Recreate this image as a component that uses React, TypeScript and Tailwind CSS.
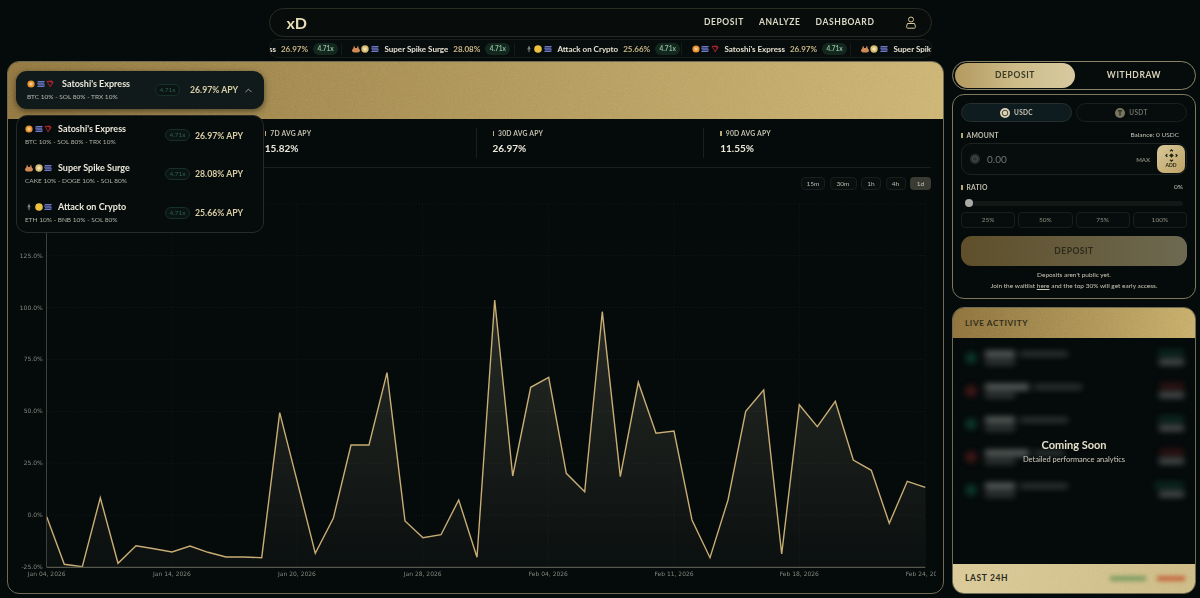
import { ChevronUp } from "lucide-react"

const font = "font-['Lato','Noto_Sans',sans-serif]"

const points = [
  [140, 860], [193, 1003], [247, 1010], [301, 803], [354, 1000], [408, 947], [462, 956], [516, 966], [570, 948], [624, 967],
  [678, 981], [731, 981], [785, 983], [839, 548], [893, 760], [946, 970], [1000, 865], [1053, 645], [1107, 645], [1161, 428],
  [1215, 873], [1269, 923], [1323, 914], [1376, 810], [1431, 982],
].map(([x, y]) => [x / 3, 230 + y / 3]).concat(
  [
    [44, 210], [98, 738], [152, 472], [206, 442], [259, 730], [314, 785], [367, 245], [421, 740], [475, 457], [528, 610],
    [582, 603], [636, 870], [690, 983], [744, 810], [797, 544], [851, 480], [905, 972], [958, 524], [1012, 590], [1066, 514],
    [1120, 690], [1174, 721], [1228, 880], [1282, 754], [1336, 772],
  ].map(([x, y]) => [480 + x / 3, 230 + y / 3])
)

const line = points.map(([x, y]) => `${x.toFixed(1)},${y.toFixed(1)}`).join(" ")
const yTicks = [["125.0%", 255.7], ["100.0%", 307.5], ["75.0%", 359.4], ["50.0%", 411.3], ["25.0%", 463.2], ["0.0%", 515.2], ["-25.0%", 567]] as const
const xTicks = [["Jan 04, 2026", 46.7], ["Jan 14, 2026", 172], ["Jan 20, 2026", 297], ["Jan 28, 2026", 422.7], ["Feb 04, 2026", 548.3], ["Feb 11, 2026", 674], ["Feb 18, 2026", 799.3], ["Feb 24, 2026", 925.3]] as const

function Coin({ kind }: { kind: string }) {
  if (kind === "btc") return <svg width="8" height="8" viewBox="0 0 8 8"><circle cx="4" cy="4" r="3.6" fill="#e8952f" /><circle cx="4" cy="4" r="1.7" fill="#f6c889" /></svg>
  if (kind === "sol") return <svg width="8" height="8" viewBox="0 0 8 8"><path d="M1 1h7L7 2.4H0zM0 3.3h7L8 4.7H1zM1 5.6h7L7 7H0z" fill="#6d78c8" /></svg>
  if (kind === "trx") return <svg width="8" height="8" viewBox="0 0 8 8"><path d="M.5 1 6 .5 7.6 2.6 4 7.6zM1.8 1.8 4 6 6 2.6z" fill="#b3242c" fillRule="evenodd" /></svg>
  if (kind === "cake") return <svg width="8" height="8" viewBox="0 0 8 8"><path d="M2 .5 3.2 3h1.6L6 .5 6.8 3.4C7.6 4 8 4.8 8 5.4 8 6.9 6.2 7.6 4 7.6S0 6.900 0 5.400C0 4.800.4 4 1.200 3.400z" fill="#cf8a55" /></svg>
  if (kind === "doge") return <svg width="8" height="8" viewBox="0 0 8 8"><circle cx="4" cy="4" r="3.700" fill="#d8bd70" /><circle cx="4" cy="4" r="1.800" fill="#efe3bb" /></svg>
  if (kind === "bnb") return <svg width="8" height="8" viewBox="0 0 8 8"><circle cx="4" cy="4" r="3.800" fill="#ecc13f" /></svg>
  return <svg width="8" height="8" viewBox="0 0 8 8"><path d="M4 .5 2.300 4 4 5 5.700 4zM2.500 4.800 4 7.500 5.500 4.800 4 5.700z" fill="#7d817c" /></svg>
}

function Coins({ kinds }: { kinds: string[] }) {
  return <div className="flex items-center gap-[1.5px]">{kinds.map((k) => <Coin key={k} kind={k} />)}</div>
}

function Badge() {
  return (
    <span className="flex h-[12px] w-[25px] shrink-0 items-center justify-center rounded-full border border-[#17302a] bg-[#0a1513] text-[6.5px] text-[#2f5e4c]">
      4.71x
    </span>
  )
}

function Label({ children }: { children: string }) {
  return (
    <div className="flex h-[10px] items-center gap-[4px] text-[6.8px] font-bold tracking-[0.2px] text-[#c2bfad]">
      <span className="h-[5px] w-[1.5px] bg-[#b9a878]" />
      {children}
    </div>
  )
}

function Grain({ id }: { id: string }) {
  return (
    <svg className="pointer-events-none absolute inset-0 h-full w-full opacity-25 mix-blend-overlay">
      <filter id={id}>
        <feTurbulence type="fractalNoise" baseFrequency="1.2" numOctaves="2" />
        <feColorMatrix type="saturate" values="0" />
      </filter>
      <rect width="100%" height="100%" filter={`url(#${id})`} />
    </svg>
  )
}

const strategies = [
  { name: "Satoshi's Express", mix: "BTC 10% - SOL 80% - TRX 10%", apy: "26.97%", coins: ["btc", "sol", "trx"] },
  { name: "Super Spike Surge", mix: "CAKE 10% - DOGE 10% - SOL 80%", apy: "28.08%", coins: ["cake", "doge", "sol"] },
  { name: "Attack on Crypto", mix: "ETH 10% - BNB 10% - SOL 80%", apy: "25.66%", coins: ["eth", "bnb", "sol"] },
]

const ticker = [
  { s: strategies[0], w: "w-[169px]" },
  { s: strategies[1], w: "w-[173px]" },
  { s: strategies[2], w: "w-[167px]" },
  { s: strategies[0], w: "w-[169px]" },
  { s: strategies[1], w: "w-[173px]" },
]

function BlurRow({ color, w1, w2, amt }: { color: string, w1: string, w2: string, amt: string }) {
  return (
    <div className="flex h-[33px] items-center pl-[4px] pr-[3px] blur-[3px]">
      <span className={`h-[12px] w-[12px] rounded-full ${color}`} />
      <div className="ml-[8px] flex flex-col gap-[3px]">
        <div className="flex gap-[5px]">
          <span className={`h-[6px] ${w1} bg-[#8b908c]`} />
          <span className={`h-[4px] ${w2} self-center bg-[#5a5f5c]`} />
        </div>
        <span className="h-[5px] w-[30px] bg-[#4e5350]" />
      </div>
      <div className="ml-auto flex flex-col items-end gap-[3px]">
        <span className={`h-[6px] ${amt}`} />
        <span className="h-[6px] w-[25px] bg-[#6d716e]" />
      </div>
    </div>
  )
}

export default function App() {
  return (
    <div className={`${font} h-[598px] w-[1200px] overflow-hidden bg-[#050a0b] text-[#e8e4d4]`}>
      <div className="mx-auto flex w-[663px] flex-col pt-[8px]">
        <div className="flex h-[29px] items-center rounded-full border border-[#2b2d25] bg-[#080d0c] pl-[17px] pr-[14px]">
          <span className="text-[16px] font-bold leading-none text-[#e6dcb6]">xD</span>
          <nav className="ml-auto flex items-center gap-[15px] text-[8.500px] font-bold tracking-[0.6px] text-[#dedac8]">
            <span>DEPOSIT</span>
            <span>ANALYZE</span>
            <span>DASHBOARD</span>
          </nav>
          <svg className="ml-[30px]" width="12" height="13" viewBox="0 0 12 13" fill="none" stroke="#d6c89c" strokeWidth="1">
            <circle cx="6" cy="3.500" r="2.500" />
            <path d="M2.500 7.500h7l1 3.200c0 1-.5 1.500-1.500 1.500H3c-1 0-1.500-.5-1.500-1.500z" />
          </svg>
        </div>
        <div className="mt-[2px] flex h-[19px] items-center overflow-hidden rounded-[9px] border border-[#181d1a] bg-[#070c0c] text-[8px] font-bold">
          <div className="ml-[-97px] flex shrink-0 items-center">
            {ticker.map(({ s, w }, i) => (
              <div key={i} className={`flex shrink-0 items-center border-r border-[#161b19] pl-[10px] ${w}`}>
                <Coins kinds={s.coins} />
                <span className="ml-[6px] whitespace-nowrap text-[#e6e2d2]">{s.name}</span>
                <span className="ml-[5px] text-[#cdbb88]">{s.apy}</span>
                <span className="ml-[5px] flex h-[12px] w-[25px] items-center justify-center rounded-full bg-[#12281f] text-[6.500px] text-[#8fb79a]">4.71x</span>
              </div>
            ))}
          </div>
        </div>
      </div>

      <div className="mt-[3px] flex h-[533px] gap-[8px] pl-[7px]">
        <section className="relative flex w-[937px] flex-col rounded-[12px] border border-[#6f6b56] bg-[#050a0b]">
          <div className="relative h-[57px] shrink-0 overflow-hidden rounded-t-[11px] bg-gradient-to-r from-[#8f7440] to-[#cbb271]">
            <Grain id="grain-main" />
          </div>

          <div className="absolute left-[8px] top-[9px] z-10 flex h-[38px] w-[248px] items-center rounded-[11px] bg-[#101a1b] pl-[11px] shadow-[0_2px_6px_rgba(0,0,0,0.5)]">
            <div className="w-[128px]">
              <div className="flex items-center">
                <Coins kinds={strategies[0].coins} />
                <span className="ml-[8px] text-[9px] font-bold leading-[12px] text-[#ece8da]">Satoshi's Express</span>
              </div>
              <div className="mt-[2px] whitespace-nowrap text-[6.500px] text-[#b8b9af]">{strategies[0].mix}</div>
            </div>
            <Badge />
            <span className="ml-[10px] whitespace-nowrap text-[8.700px] font-bold text-[#d9cfa6]">26.97% APY</span>
            <ChevronUp className="ml-[5px] text-[#d9d6c6]" size={11} strokeWidth={1.500} />
          </div>

          <div className="absolute left-[8px] top-[53px] z-10 flex h-[118px] w-[248px] flex-col justify-center rounded-[11px] border border-[#262b27] bg-[#060b0c]">
            {strategies.map((s) => (
              <div key={s.name} className="flex h-[39px] items-center pl-[8px]">
                <div className="w-[140px]">
                  <div className="flex items-center">
                    <Coins kinds={s.coins} />
                    <span className="ml-[6px] text-[9px] font-bold leading-[12px] text-[#ece8da]">{s.name}</span>
                  </div>
                  <div className="mt-[2px] whitespace-nowrap text-[6.500px] text-[#b0b1a7]">{s.mix}</div>
                </div>
                <Badge />
                <span className="ml-[5px] whitespace-nowrap text-[8.700px] font-bold text-[#d9cfa6]">{s.apy} APY</span>
              </div>
            ))}
          </div>

          <div className="mx-[12px] grid h-[49px] shrink-0 grid-cols-4 border-b border-[#1a1f1d] pt-[9px]">
            <div />
            {[["7D AVG APY", "15.82%"], ["30D AVG APY", "26.97%"], ["90D AVG APY", "11.55%"]].map(([label, value]) => (
              <div key={label} className="h-[30px] border-l border-[#1a1f1d] pl-[16px] first:border-l-0">
                <Label>{label}</Label>
                <div className="mt-[3px] text-[10px] font-bold leading-[14px] text-[#ece8da]">{value}</div>
              </div>
            ))}
          </div>

          <div className="mr-[12px] mt-[9px] flex shrink-0 justify-end gap-[4.500px] text-[6.500px] text-[#bcbcae]">
            {[["15m", "w-[24px]"], ["30m", "w-[27px]"], ["1h", "w-[20px]"], ["4h", "w-[20px]"]].map(([t, w]) => (
              <span key={t} className={`flex h-[13px] items-center justify-center rounded-[4px] border border-[#191e1c] bg-[#090e0e] ${w}`}>{t}</span>
            ))}
            <span className="flex h-[13px] w-[21px] items-center justify-center rounded-[4px] bg-[#3a3c33] text-[#c8c6b4]">1d</span>
          </div>

          <svg className="mt-[13px] block shrink-0" width="928" height="390" viewBox="8 203 928 390">
            <defs>
              <linearGradient id="area" gradientUnits="userSpaceOnUse" x1="0" y1="300" x2="0" y2="567">
                <stop offset="0" stopColor="#c8c4a0" stopOpacity="0.18" />
                <stop offset="1" stopColor="#c8c4a0" stopOpacity="0.03" />
              </linearGradient>
            </defs>
            <g stroke="#161c1a" strokeWidth="0.7" strokeDasharray="1.500 1.500">
              <line x1="46.700" x2="925.300" y1="203.800" y2="203.800" />
              {yTicks.slice(0, 6).map(([, y]) => <line key={y} x1="46.700" x2="925.300" y1={y} y2={y} />)}
              {xTicks.slice(1).map(([, x]) => <line key={x} x1={x} x2={x} y1="203.800" y2="567" />)}
            </g>
            <polygon points={`46.700,567 ${line} 925.300,567`} fill="url(#area)" />
            <polyline points={line} fill="none" stroke="#c8ad74" strokeWidth="1.400" strokeLinejoin="miter" />
            <line x1="46.500" x2="46.500" y1="203.800" y2="567" stroke="#4c4f45" strokeWidth="0.800" />
            <line x1="46.500" x2="925.300" y1="567.300" y2="567.300" stroke="#55574c" strokeWidth="1.200" />
            <g fontFamily="'DejaVu Sans', sans-serif" fontSize="6" fill="#85887f">
              {yTicks.map(([t, y]) => <text key={t} x="42.700" y={y + 2} textAnchor="end">{t}</text>)}
              {xTicks.map(([t, x]) => <text key={t} x={x} y="575.500" textAnchor="middle">{t}</text>)}
            </g>
          </svg>
        </section>

        <aside className="flex w-[244px] flex-col gap-[4px]">
          <div className="flex h-[29px] shrink-0 items-center rounded-full border border-[#8a8468] bg-[#060b0c] px-[2px] text-[8.500px] font-bold tracking-[0.6px]">
            <span className="flex h-[25px] w-[120px] items-center justify-center rounded-full bg-gradient-to-r from-[#b39a60] via-[#cdbb88] to-[#d8caa0] text-[#3a3a28]">DEPOSIT</span>
            <span className="flex flex-1 items-center justify-center text-[#d8d2b8]">WITHDRAW</span>
          </div>

          <div className="flex h-[205px] shrink-0 flex-col rounded-[12px] border border-[#7d785f] bg-[#050a0b] px-[8px] pt-[8px]">
            <div className="flex gap-[4px] text-[6.500px] font-bold tracking-[0.3px]">
              <span className="flex h-[19px] flex-1 items-center justify-center gap-[4px] rounded-full border border-[#25302e] bg-[#0e1c1f] text-[#c5c3b3]">
                <svg width="10" height="10" viewBox="0 0 10 10"><circle cx="5" cy="5" r="5" fill="#d9d2b8" /><circle cx="5" cy="5" r="2.800" fill="none" stroke="#4a4630" strokeWidth="1" /></svg>
                USDC
              </span>
              <span className="flex h-[19px] flex-1 items-center justify-center gap-[4px] rounded-full border border-[#1a201e] bg-[#070c0c] text-[#6e7068]">
                <svg width="10" height="10" viewBox="0 0 10 10"><circle cx="5" cy="5" r="5" fill="#77765f" /><path d="M2.800 2.800h4.400M5 2.800v4.700" stroke="#1c1c14" strokeWidth="1.100" /></svg>
                USDT
              </span>
            </div>

            <div className="mt-[8px] flex h-[10px] items-center justify-between pr-[8px]">
              <Label>AMOUNT</Label>
              <span className="text-[6.500px] text-[#c4c3b5]">Balance: 0 USDC</span>
            </div>

            <div className="mt-[3px] flex h-[32px] items-center rounded-[10px] border border-[#1d2320] bg-[#070c0d] pl-[8px] pr-[1px]">
              <span className="flex h-[10px] w-[10px] items-center justify-center rounded-full bg-[#2b2f2c]"><span className="h-[6px] w-[6px] rounded-full border border-[#4a4e4a]" /></span>
              <span className="ml-[7px] text-[10px] text-[#71766f]">0.00</span>
              <span className="ml-auto mr-[7px] text-[6px] font-bold text-[#86877a]">MAX</span>
              <span className="flex h-[28px] w-[28px] flex-col items-center justify-center rounded-[7px] bg-gradient-to-br from-[#d8c898] to-[#bda266] text-[#262416]">
                <svg width="13" height="13" viewBox="0 0 14 14" fill="#1d2318">
                  <path d="M7 4.500 9.500 7 7 9.500 4.500 7z" />
                  <path d="M7 0 9 2 8 3 7 2 6 3 5 2zM14 7 12 9 11 8 12 7 11 6 12 5zM7 14 5 12 6 11 7 12 8 11 9 12zM0 7 2 5 3 6 2 7 3 8 2 9z" />
                </svg>
                <span className="text-[5px] font-bold leading-[7px]">ADD</span>
              </span>
            </div>

            <div className="mt-[7px] flex h-[10px] items-center justify-between pr-[4px]">
              <Label>RATIO</Label>
              <span className="text-[6.500px] text-[#c4c3b5]">0%</span>
            </div>

            <div className="ml-[4px] mr-[4px] mt-[7px] flex h-[8px] items-center rounded-full">
              <span className="z-10 h-[8px] w-[8px] shrink-0 rounded-full bg-[#a9aaa5]" />
              <span className="ml-[-4px] h-[5px] flex-1 rounded-full bg-[#121816]" />
            </div>

            <div className="mt-[5px] grid grid-cols-4 gap-[3px] text-[6.500px] text-[#8f9085]">
              {["25%", "50%", "75%", "100%"].map((p) => (
                <span key={p} className="flex h-[16px] items-center justify-center rounded-[4px] border border-[#191e1c] bg-[#070c0c]">{p}</span>
              ))}
            </div>

            <div className="mt-[8px] flex h-[30px] items-center justify-center rounded-[11px] bg-gradient-to-r from-[#5f4f2a] to-[#6d6950] text-[8.500px] font-bold tracking-[0.5px] text-[#2b2a1c]">DEPOSIT</div>

            <div className="mt-[4px] text-center text-[6.500px] leading-[10.500px] text-[#c8c5b4]">
              <p>Deposits aren't public yet.</p>
              <p>Join the waitlist <span className="underline">here</span> and the top 30% will get early access.</p>
            </div>
          </div>

          <div className="relative mt-[4px] flex h-[287px] shrink-0 flex-col overflow-hidden rounded-[12px] border border-[#6f6b56] bg-[#050a0b]">
            <div className="relative flex h-[30px] shrink-0 items-center bg-gradient-to-r from-[#8a6f3c] to-[#c6ac69] pl-[12px] text-[8.200px] font-bold tracking-[0.6px] text-[#2d2a18]">
              <Grain id="grain-live" />
              LIVE ACTIVITY
            </div>
            <div className="flex flex-1 flex-col px-[8px] pt-[3px] opacity-70">
              <BlurRow color="bg-[#0f4a36]" w1="w-[30px]" w2="w-[48px]" amt="w-[26px] bg-[#123a2b]" />
              <BlurRow color="bg-[#5a1e1c]" w1="w-[44px]" w2="w-[48px]" amt="w-[24px] bg-[#4a1a1a]" />
              <BlurRow color="bg-[#0f4a36]" w1="w-[30px]" w2="w-[48px]" amt="w-[26px] bg-[#123a2b]" />
              <BlurRow color="bg-[#5a1e1c]" w1="w-[44px]" w2="w-[30px]" amt="w-[24px] bg-[#4a1a1a]" />
              <BlurRow color="bg-[#0f4a36]" w1="w-[30px]" w2="w-[48px]" amt="w-[30px] bg-[#123a2b]" />
            </div>
            <div className="absolute inset-x-0 top-[129px] text-center">
              <div className="text-[11px] font-bold leading-[16px] text-[#e4dfc8]">Coming Soon</div>
              <div className="mt-[1px] text-[7.500px] leading-[11px] text-[#cfccbc]">Detailed performance analytics</div>
            </div>
            <div className="relative flex h-[29px] shrink-0 items-center justify-between bg-gradient-to-r from-[#d9c894] to-[#cbb981] pl-[12px] pr-[10px] text-[8.500px] font-bold tracking-[0.6px] text-[#28261a]">
              <Grain id="grain-foot" />
              LAST 24H
              <div className="flex gap-[11px] blur-[2px]">
                <span className="h-[5px] w-[36px] bg-[#7c9c60]" />
                <span className="h-[5px] w-[28px] bg-[#c4673f]" />
              </div>
            </div>
          </div>
        </aside>
      </div>
    </div>
  )
}
